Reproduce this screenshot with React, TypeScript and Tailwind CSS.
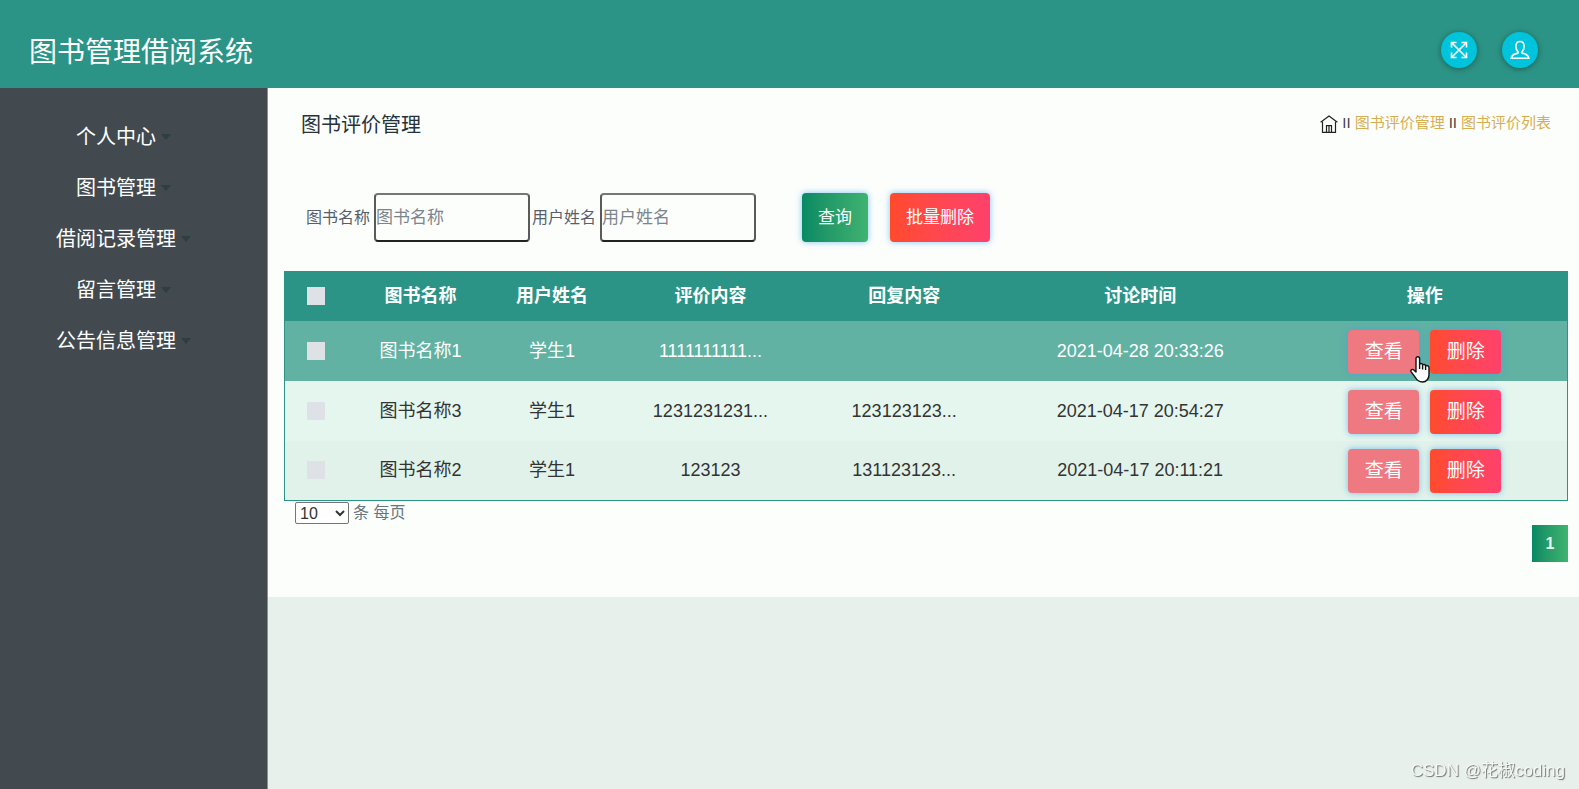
import React from 'react';

interface Review {
  book: string;
  user: string;
  content: string;
  reply: string;
  time: string;
}

const menus = ['个人中心', '图书管理', '借阅记录管理', '留言管理', '公告信息管理'];

const columns = ['图书名称', '用户姓名', '评价内容', '回复内容', '讨论时间', '操作'];

const reviews: Review[] = [
  { book: '图书名称1', user: '学生1', content: '1111111111...', reply: '', time: '2021-04-28 20:33:26' },
  { book: '图书名称3', user: '学生1', content: '1231231231...', reply: '123123123...', time: '2021-04-17 20:54:27' },
  { book: '图书名称2', user: '学生1', content: '123123', reply: '131123123...', time: '2021-04-17 20:11:21' },
];

const rowStyles = [
  'bg-[#61b2a3] text-white',
  'bg-[#e5f6ee] text-[#333333]',
  'bg-[#e1f2ea] text-[#333333]',
];

const FullscreenIcon = () => (
  <svg className="h-[18px] w-[18px]" viewBox="0 0 18 18" fill="none" stroke="currentColor" strokeWidth="1.6">
    <path d="M1.5 1.5l15 15M16.5 1.5l-15 15" />
    <path d="M1.5 6.500V1.5H6.500M11.500 1.5h5v5M16.5 11.500v5h-5M6.500 16.5h-5v-5" />
  </svg>
);

const UserIcon = () => (
  <svg className="h-5 w-5" viewBox="0 0 20 20" fill="none" stroke="currentColor" strokeWidth="1.6" strokeLinejoin="round">
    <path d="M8 11.8C6.600 10.4 5.900 8.500 5.900 6.300 5.900 3.300 7.400 1.500 10 1.500s4.100 1.800 4.100 4.800c0 2.200-.7 4.100-2.100 5.500v1.300c3.600.6 6.300 2.100 6.900 5.200H1.100c.6-3.100 3.300-4.600 6.900-5.200z" />
  </svg>
);

const HomeIcon = () => (
  <svg className="h-[18px] w-[18px]" viewBox="0 0 18 18" fill="none" stroke="currentColor" strokeWidth="1.2">
    <path d="M.6 7.200L9 1l8.400 6.200" />
    <path d="M2.500 6.500v10.900h13V6.500" />
    <path d="M6.500 17.400v-6.800h5v6.800M9 10.600v6.800" />
  </svg>
);

const HandCursor = () => (
  <svg className="pointer-events-none absolute top-7 left-[62px] z-10 h-[27px] w-5" viewBox="0 0 20 27" fill="#fff" stroke="#111" strokeWidth="1.4" strokeLinejoin="round">
    <path d="M6 15V2.600a1.800 1.800 0 0 1 3.600 0V8c1.200-.9 2.700-.5 3 .8 1.200-.8 2.800-.3 3 1 1.600-.7 3.400.3 3.400 2v6.700c0 4-2.400 7.500-6.500 7.500-3.500 0-5.600-1.600-7.200-4.700L1 15.600c-.7-1.700 1.400-2.900 2.800-1.700L6 16z" />
    <path d="M9.600 8v5M12.600 9v4.500M15.600 10v4" />
  </svg>
);

const ActionButton: React.FC<{ label: string; className: string }> = ({ label, className }) => (
  <button type="button" className={`h-11 w-[71px] rounded text-[19px] text-white shadow-[0_0_6px_#3aa0e8a0] ${className}`}>
    {label}
  </button>
);

const SearchField: React.FC<{ id: string; label: string }> = ({ id, label }) => (
  <>
    <label htmlFor={id} className="mr-0.5 text-base text-[#55606c]">{label}</label>
    <input
      id={id}
      type="text"
      placeholder={label}
      className="h-[49px] w-[156px] rounded border-2 border-t-[#767676] border-r-[#5a5a5a] border-b-[#222222] border-l-[#5a5a5a] bg-transparent text-[17px] placeholder:text-[#7d858c]"
    />
  </>
);

const checkboxClass = 'block mx-auto h-[18px] w-[18px] appearance-none bg-[#dee1e6]';

export default function App() {
  return (
    <div className="flex min-h-screen flex-col bg-[#e8f0eb] font-['Liberation_Sans','Noto_Sans_CJK_SC',sans-serif]">
      <header className="flex h-[88px] items-center justify-between bg-[#2c9486] pt-3 pr-[41px] pl-[29px] text-white">
        <h1 className="pt-1.5 text-[28px]">图书管理借阅系统</h1>
        <div className="flex gap-[25px]">
          <button type="button" aria-label="全屏" className="flex h-9 w-9 items-center justify-center rounded-full bg-[#00c4dc] shadow-[0_1px_6px_#00000060]">
            <FullscreenIcon />
          </button>
          <button type="button" aria-label="用户" className="flex h-9 w-9 items-center justify-center rounded-full bg-[#00c4dc] shadow-[0_1px_6px_#00000060]">
            <UserIcon />
          </button>
        </div>
      </header>

      <div className="flex flex-1">
        <nav className="w-[268px] shrink-0 border-r border-[#8a9092] bg-[#424a4f] pt-[23px] pr-5">
          <ul>
            {menus.map((menu) => (
              <li key={menu}>
                <a href="#" className="flex h-[51px] items-center justify-center gap-[5px] text-xl text-white">
                  {menu}
                  <span className="border-x-[5px] border-t-[6px] border-x-transparent border-t-[#2f3f3e]" />
                </a>
              </li>
            ))}
          </ul>
        </nav>

        <div className="min-w-0 flex-1">
          <main className="bg-[#fcfefc] pb-[35px]">
            <div className="flex h-[74px] items-center justify-between pr-7 pl-[33px]">
              <h2 className="text-xl text-[#263238]">图书评价管理</h2>
              <div className="flex items-center gap-1 pb-[3px] text-[15px] text-[#d6ae52]">
                <a href="#" aria-label="首页" className="text-[#222222]"><HomeIcon /></a>
                <span className="text-[#444444]">II</span>
                <a href="#">图书评价管理</a>
                <span className="text-[#444444]">II</span>
                <a href="#">图书评价列表</a>
              </div>
            </div>

            <form className="mt-[31px] flex items-center gap-0.5 pl-[38px]">
              <SearchField id="book" label="图书名称" />
              <SearchField id="user" label="用户姓名" />
              <button type="button" className="ml-11 h-[49px] rounded bg-linear-to-r from-[#058a63] to-[#3fb370] px-4 text-[17px] text-white shadow-[0_0_6px_#3aa0e8a0]">
                查询
              </button>
              <button type="button" className="ml-5 h-[49px] rounded bg-linear-to-r from-[#ff4b2b] to-[#ff416c] px-4 text-[17px] text-white shadow-[0_0_6px_#3aa0e8a0]">
                批量删除
              </button>
            </form>

            <div className="mt-[29px] pr-[11px] pl-4">
              <table className="w-full table-fixed border border-[#2c9486] text-center text-lg">
                <colgroup>
                  <col className="w-[4.9%]" />
                  <col className="w-[11.4%]" />
                  <col className="w-[9.1%]" />
                  <col className="w-[15.6%]" />
                  <col className="w-[14.6%]" />
                  <col className="w-[22.2%]" />
                  <col className="w-[22.2%]" />
                </colgroup>
                <thead className="bg-[#2c9486] text-white">
                  <tr className="h-[49px]">
                    <th><input type="checkbox" aria-label="全选" className={checkboxClass} /></th>
                    {columns.map((column) => (
                      <th key={column} className="font-bold">{column}</th>
                    ))}
                  </tr>
                </thead>
                <tbody>
                  {reviews.map((review, i) => (
                    <tr key={review.book} className={`h-[60px] ${rowStyles[i]}`}>
                      <td><input type="checkbox" aria-label={review.book} className={checkboxClass} /></td>
                      <td>{review.book}</td>
                      <td>{review.user}</td>
                      <td>{review.content}</td>
                      <td>{review.reply}</td>
                      <td>{review.time}</td>
                      <td>
                        <div className="relative mx-auto flex w-max gap-[11px] pt-0.5">
                          <ActionButton label="查看" className="bg-[#ee7981]" />
                          <ActionButton label="删除" className="bg-linear-to-r from-[#ff4b2b] to-[#ff416c]" />
                          {i === 0 && <HandCursor />}
                        </div>
                      </td>
                    </tr>
                  ))}
                </tbody>
              </table>

              <div className="flex items-center gap-1 pl-[11px] text-base text-[#67757c]">
                <select id="pageSize" className="h-[22px] w-[54px] rounded-xs border border-[#767676] bg-white text-base text-[#333333]">
                  <option>10</option>
                </select>
                <label htmlFor="pageSize">条 每页</label>
              </div>

              <div className="flex justify-end">
                <button type="button" className="h-[37px] w-9 bg-linear-to-r from-[#058a63] to-[#3fb370] text-base font-bold text-[#e6f7ee]">1</button>
              </div>
            </div>
          </main>
        </div>
      </div>

      <div className="fixed right-[14px] bottom-1.5 text-[17px] text-[#f4f8f6] [text-shadow:1px_1px_1px_#707070]">CSDN @花椒coding</div>
    </div>
  );
}
